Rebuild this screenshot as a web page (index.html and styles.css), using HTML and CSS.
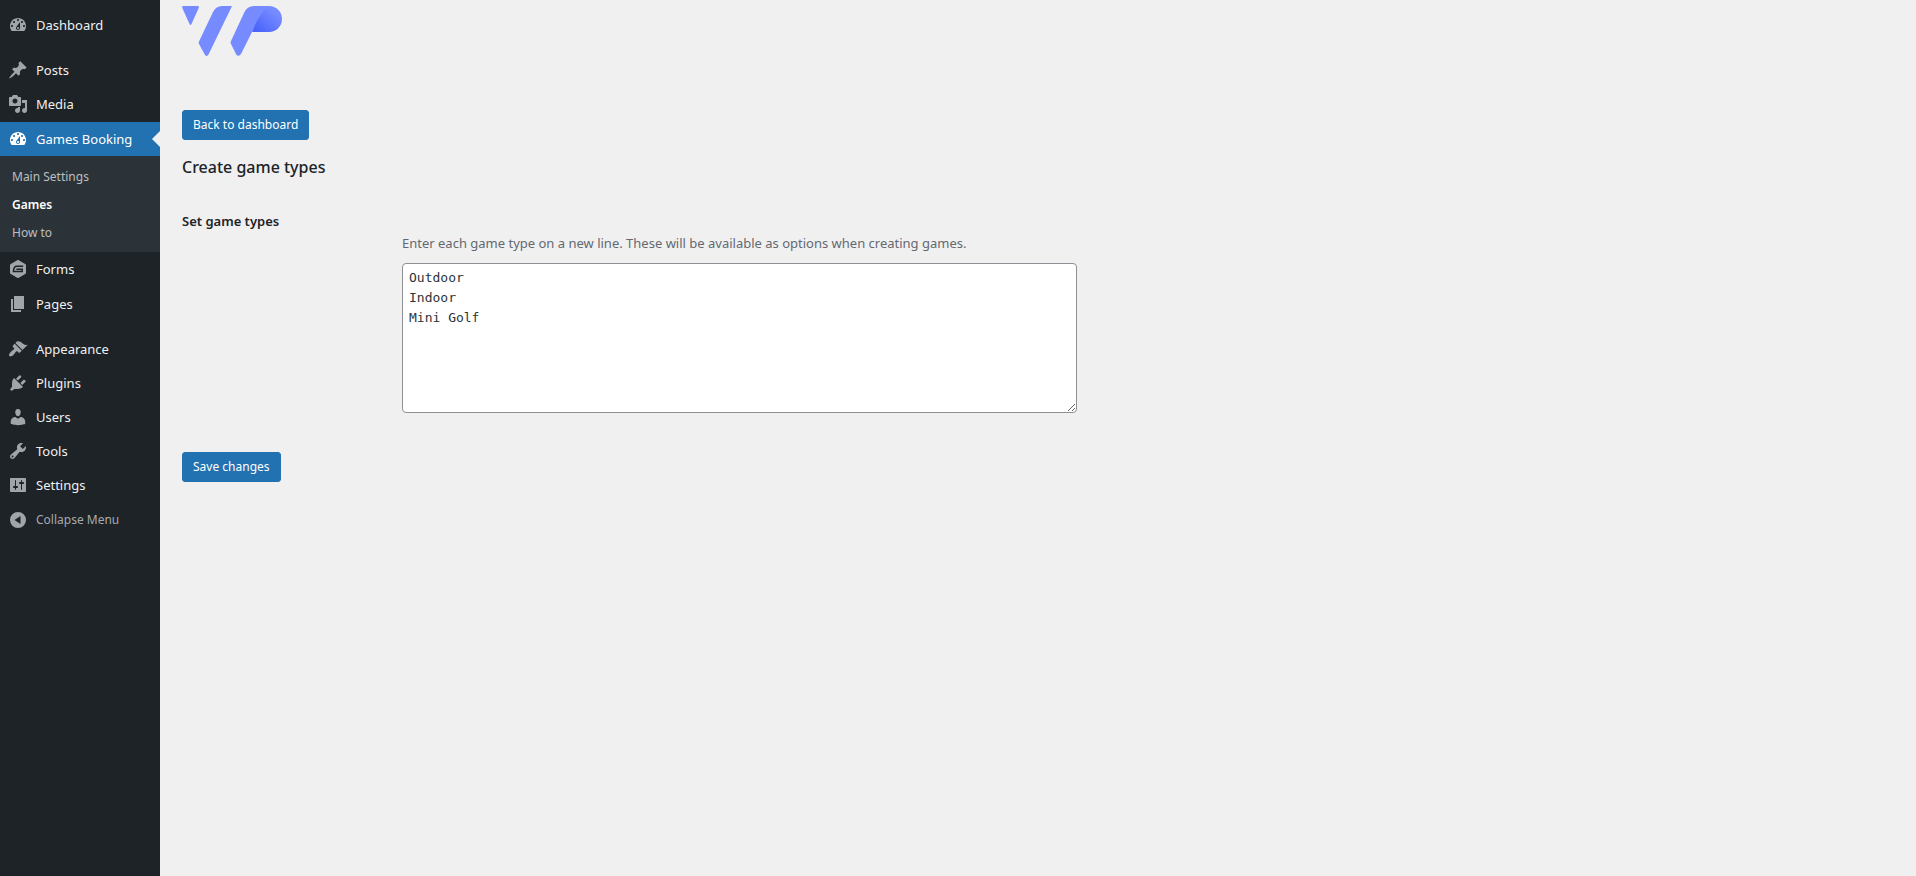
FILE: index.html
```html
<!DOCTYPE html>
<html lang="en">
<head>
<meta charset="utf-8">
<meta name="viewport" content="width=device-width, initial-scale=1">
<title>Create game types</title>
<link rel="stylesheet" href="styles.css">
</head>
<body>
<svg class="sprite" aria-hidden="true">
  <symbol id="i-dashboard" viewBox="0 0 20 20"><path fill-rule="evenodd" d="M3.76 16h12.48c1.1-1.37 1.76-3.11 1.76-5 0-4.42-3.58-8-8-8s-8 3.58-8 8c0 1.89.66 3.63 1.76 5zM10 4c.55 0 1 .45 1 1s-.45 1-1 1-1-.45-1-1 .45-1 1-1zM6 6c.55 0 1 .45 1 1s-.45 1-1 1-1-.45-1-1 .45-1 1-1zm8 0c.55 0 1 .45 1 1s-.45 1-1 1-1-.45-1-1 .45-1 1-1zm-5.37 5.55L12 7v6c0 1.1-.9 2-2 2s-2-.9-2-2c0-.57.24-1.08.63-1.45zM4 10c.55 0 1 .45 1 1s-.45 1-1 1-1-.45-1-1 .45-1 1-1zm12 0c.55 0 1 .45 1 1s-.45 1-1 1-1-.45-1-1 .45-1 1-1zm-5 3c0-.55-.45-1-1-1s-1 .45-1 1 .45 1 1 1 1-.45 1-1z"/></symbol>
</svg>
<div class="layout">
  <nav class="sidebar" aria-label="Main menu">
    <ul class="menu">
      <li><a class="menu-item" href="#"><svg class="icon"><use href="#i-dashboard"/></svg>Dashboard</a></li>
      <li class="separator"></li>
      <li><a class="menu-item" href="#"><svg class="icon" viewBox="0 0 20 20"><path d="M10.44 3.02l1.82-1.82 6.36 6.35-1.83 1.82c-1.05-.68-2.48-.57-3.41.36l-.75.75c-.92.93-1.04 2.35-.35 3.41l-1.83 1.82-2.41-2.41-2.8 2.79c-.42.42-3.38 2.71-3.8 2.29s1.86-3.39 2.28-3.81l2.79-2.79L4.1 9.36l1.83-1.82c1.05.69 2.48.57 3.4-.36l.75-.75c.93-.92 1.05-2.35.36-3.41z"/></svg>Posts</a></li>
      <li><a class="menu-item tall" href="#"><svg class="icon" viewBox="0 0 20 20"><path fill-rule="evenodd" d="M13 11V4c0-.55-.45-1-1-1h-1.67L9 1H5L3.67 3H2c-.55 0-1 .45-1 1v7c0 .55.45 1 1 1h10c.55 0 1-.45 1-1zM7 4.5c1.38 0 2.5 1.12 2.5 2.5S8.38 9.5 7 9.5 4.5 8.38 4.5 7 5.62 4.5 7 4.5zM14 6h5v10.5c0 1.38-1.12 2.5-2.5 2.5S14 17.88 14 16.5s1.12-2.5 2.5-2.5c.17 0 .34.02.5.05V9h-3V6zm-4 8.05V13h2v3.5c0 1.38-1.12 2.5-2.5 2.5S7 17.88 7 16.5 8.12 14 9.5 14c.17 0 .34.02.5.05z"/></svg>Media</a></li>
      <li>
        <a class="menu-item current" href="#"><svg class="icon"><use href="#i-dashboard"/></svg>Games Booking</a>
        <ul class="submenu">
          <li><a class="submenu-item" href="#">Main Settings</a></li>
          <li><a class="submenu-item active" href="#" aria-current="page">Games</a></li>
          <li><a class="submenu-item" href="#">How to</a></li>
        </ul>
      </li>
      <li><a class="menu-item tall" href="#"><svg class="icon" viewBox="0 0 20 20"><path d="M10.800 1.300l6.400 3.600c.5.300.8.800.8 1.400v7.400c0 .6-.3 1.100-.8 1.400l-6.400 3.600c-.5.300-1.100.300-1.600 0l-6.400-3.600c-.5-.3-.8-.8-.8-1.400V6.300c0-.6.3-1.100.8-1.400l6.400-3.600c.5-.3 1.100-.3 1.600 0z"/><path class="cutout" d="M15.200 7.200H8.800C6.600 7.200 5.700 8.800 5.400 12.500H14.200V10.200H8.400"/></svg>Forms</a></li>
      <li><a class="menu-item" href="#"><svg class="icon" viewBox="0 0 20 20"><path d="M6 15V2h10v13H6zm-1 1h8v2H3V5h2v11z"/></svg>Pages</a></li>
      <li class="separator"></li>
      <li><a class="menu-item" href="#"><svg class="icon" viewBox="0 0 20 20"><path d="M14.48 11.06L7.41 3.99l1.5-1.5c.5-.56 2.3-.47 3.51.32 1.21.8 1.43 1.28 2.91 2.1 1.18.64 2.45 1.26 4.45.85zm-.71.71L6.7 4.7 4.93 6.47c-.39.39-.39 1.02 0 1.41l1.06 1.06c.39.39.39 1.03 0 1.42-.6.6-1.43 1.11-2.21 1.69-.35.26-.7.53-1.01.84C1.43 14.23.4 16.08 1.4 17.07c.99 1 2.84-.03 4.18-1.36.31-.31.58-.66.85-1.02.57-.78 1.08-1.61 1.69-2.21.39-.39 1.02-.39 1.41 0l1.06 1.06c.39.39 1.02.39 1.41 0z"/></svg>Appearance</a></li>
      <li><a class="menu-item" href="#"><svg class="icon" viewBox="0 0 20 20"><path d="M13.11 4.36L9.87 7.6 8 5.73l3.24-3.24c.35-.34 1.05-.2 1.56.32.52.51.66 1.21.31 1.55zm-8 1.77l.91-1.12 9.01 9.01-1.19.84c-.71.71-2.63 1.16-3.82 1.16H6.14L4.9 17.26c-.59.59-1.54.59-2.12 0-.59-.58-.59-1.53 0-2.12l1.24-1.24v-3.88c0-1.13.4-3.19 1.09-3.89zm7.26 3.97l3.24-3.24c.34-.35 1.04-.21 1.55.31.52.51.66 1.21.31 1.55l-3.24 3.25z"/></svg>Plugins</a></li>
      <li><a class="menu-item" href="#"><svg class="icon" viewBox="0 0 20 20"><path d="M10 9.25c-2.27 0-2.73-3.44-2.73-3.44C7 4.02 7.82 2 9.97 2c2.16 0 2.98 2.02 2.71 3.81 0 0-.41 3.44-2.68 3.44zm0 2.57L12.72 10c2.39 0 4.52 2.33 4.52 4.53v2.49s-3.65 1.13-7.24 1.13c-3.65 0-7.24-1.13-7.24-1.13v-2.49c0-2.25 1.94-4.48 4.47-4.48z"/></svg>Users</a></li>
      <li><a class="menu-item" href="#"><svg class="icon" viewBox="0 0 20 20"><path fill-rule="evenodd" d="M16.68 9.77c-1.34 1.34-3.3 1.67-4.95.99l-5.41 6.52c-.99.99-2.59.99-3.58 0s-.99-2.59 0-3.57l6.52-5.42c-.68-1.65-.35-3.61.99-4.95 1.28-1.28 3.12-1.62 4.72-1.06l-2.89 2.89 2.82 2.82 2.86-2.87c.53 1.58.18 3.39-1.08 4.65zM3.81 16.21c.4.39 1.04.39 1.43 0 .4-.4.4-1.04 0-1.43-.39-.4-1.03-.4-1.43 0-.39.39-.39 1.03 0 1.43z"/></svg>Tools</a></li>
      <li><a class="menu-item" href="#"><svg class="icon" viewBox="0 0 20 20"><path fill-rule="evenodd" d="M18 16V4c0-.55-.45-1-1-1H3c-.55 0-1 .45-1 1v12c0 .55.45 1 1 1h14c.55 0 1-.45 1-1zM8 11h1c.55 0 1 .45 1 1s-.45 1-1 1H8v1.5c0 .28-.22.5-.5.5s-.5-.22-.5-.5V13H6c-.55 0-1-.45-1-1s.45-1 1-1h1V5.5c0-.28.22-.5.5-.5s.5.22.5.5V11zm5-2h-1c-.55 0-1-.45-1-1s.45-1 1-1h1V5.5c0-.28.22-.5.5-.5s.5.22.5.5V7h1c.55 0 1 .45 1 1s-.45 1-1 1h-1v5.5c0 .28-.22.5-.5.5s-.5-.22-.5-.5V9z"/></svg>Settings</a></li>
      <li><button class="menu-item collapse" type="button"><svg class="icon" viewBox="0 0 20 20"><path fill-rule="evenodd" d="M10 2a8 8 0 1 0 0 16a8 8 0 1 0 0-16zM12.500 6v8L6.500 10z"/></svg>Collapse Menu</button></li>
    </ul>
  </nav>
  <main class="content">
    <svg class="logo" viewBox="0 0 100 50" role="img" aria-label="WP">
      <defs><linearGradient id="fold" x1="0" y1="1" x2="1" y2="0"><stop offset="0.1" stop-color="#4a63fb"/><stop offset="0.75" stop-color="#758bff"/></linearGradient></defs>
      <path fill="#758bff" d="M1.500 0H15.500Q17.500 0 16.700 2L9.500 18Q8.500 20 7.500 18L.3 2Q-.5 0 1.500 0z"/>
      <path fill="#758bff" d="M40 0H50L26.500 48.500Q25 51 23 49L17 38Q16.500 36.500 17 35.500L31 6Q34 0 40 0z"/>
      <path fill="url(#fold)" d="M70 26C73 14 79 5 87 0A13 13 0 0 1 87 26z"/>
      <path fill="#758bff" d="M72 0H88C80 4 75 14 70 26L59 48Q57 51 54.500 49L49 38Q48.200 36.500 49 35L62 7Q65 0 72 0z"/>
    </svg>
    <a class="button back" href="#">Back to dashboard</a>
    <h2 class="title">Create game types</h2>
    <form class="form">
      <div class="form-row">
        <label class="form-label" for="game-types">Set game types</label>
        <div class="form-field">
          <p class="description" id="game-types-help">Enter each game type on a new line. These will be available as options when creating games.</p>
          <textarea class="textarea" id="game-types" aria-describedby="game-types-help" spellcheck="false">Outdoor
Indoor
Mini Golf</textarea>
        </div>
      </div>
      <button class="button" type="button">Save changes</button>
    </form>
  </main>
</div>
</body>
</html>
```
FILE: styles.css
```css
* {
  box-sizing: border-box;
}

body {
  margin: 0;
  background: #f0f0f1;
  color: #1d2327;
  font: 13px/20px "Noto Sans", "Open Sans", sans-serif;
}

.sprite {
  display: none;
}

.layout {
  display: flex;
  min-height: 100vh;
}

.sidebar {
  flex: 0 0 160px;
  padding-top: 8px;
  background: #1d2327;
}

.menu,
.submenu {
  margin: 0;
  padding: 0;
  list-style: none;
}

.separator {
  height: 11px;
}

.menu-item {
  display: flex;
  align-items: center;
  gap: 8px;
  position: relative;
  width: 100%;
  height: 34px;
  padding: 0 8px;
  border: 0;
  background: none;
  color: #f0f0f1;
  font: inherit;
  text-decoration: none;
}

.menu-item.tall {
  height: 35px;
  padding-bottom: 1px;
}

.menu-item.current {
  background: #2271b1;
  color: #fff;
}

.menu-item.current::after {
  content: "";
  position: absolute;
  top: 9px;
  right: 0;
  border: 8px solid transparent;
  border-left-width: 0;
  border-right-color: #f0f0f1;
}

.icon {
  flex: none;
  width: 20px;
  height: 20px;
  fill: #a0a5aa;
}

.current .icon {
  fill: #fff;
}

.cutout {
  fill: none;
  stroke: #1d2327;
  stroke-width: 1.5;
}

.menu-item.collapse {
  height: 36px;
  color: #a7aaad;
  font-size: 12px;
}

.submenu {
  padding: 7px 0 5px;
  background: #2c3338;
}

.submenu-item {
  display: block;
  padding: 4px 12px;
  color: #bcbfc2;
  font-size: 12px;
  text-decoration: none;
}

.submenu-item.active {
  color: #fff;
  font-weight: 600;
}

.content {
  flex: 1;
  min-width: 0;
  padding: 6px 20px 20px 22px;
}

.logo {
  display: block;
  width: 100px;
  height: 50px;
  margin-bottom: 54px;
}

.button {
  display: inline-block;
  height: 30px;
  padding: 0 10px;
  border: 1px solid #2271b1;
  border-radius: 3px;
  background: #2271b1;
  color: #fff;
  font: inherit;
  font-size: 12px;
  line-height: 28px;
  text-decoration: none;
}

.back {
  display: block;
  width: fit-content;
}

.title {
  margin: 15px 0 0;
  font-size: 16px;
  font-weight: 500;
  line-height: 24px;
}

.form-row {
  display: flex;
  padding: 32px 0 39px;
}

.form-label {
  flex: 0 0 220px;
  font-weight: 600;
}

.form-field {
  flex: 1;
  min-width: 0;
  padding-top: 22px;
}

.description {
  margin: 0 0 10px;
  color: #646970;
}

.textarea {
  display: block;
  width: 100%;
  max-width: 675px;
  height: 150px;
  padding: 4px 6px;
  border: 1px solid #8c8f94;
  border-radius: 4px;
  background: #fff;
  color: #2c3338;
  font: 13px/20px "DejaVu Sans Mono", "Liberation Mono", monospace;
}
```
